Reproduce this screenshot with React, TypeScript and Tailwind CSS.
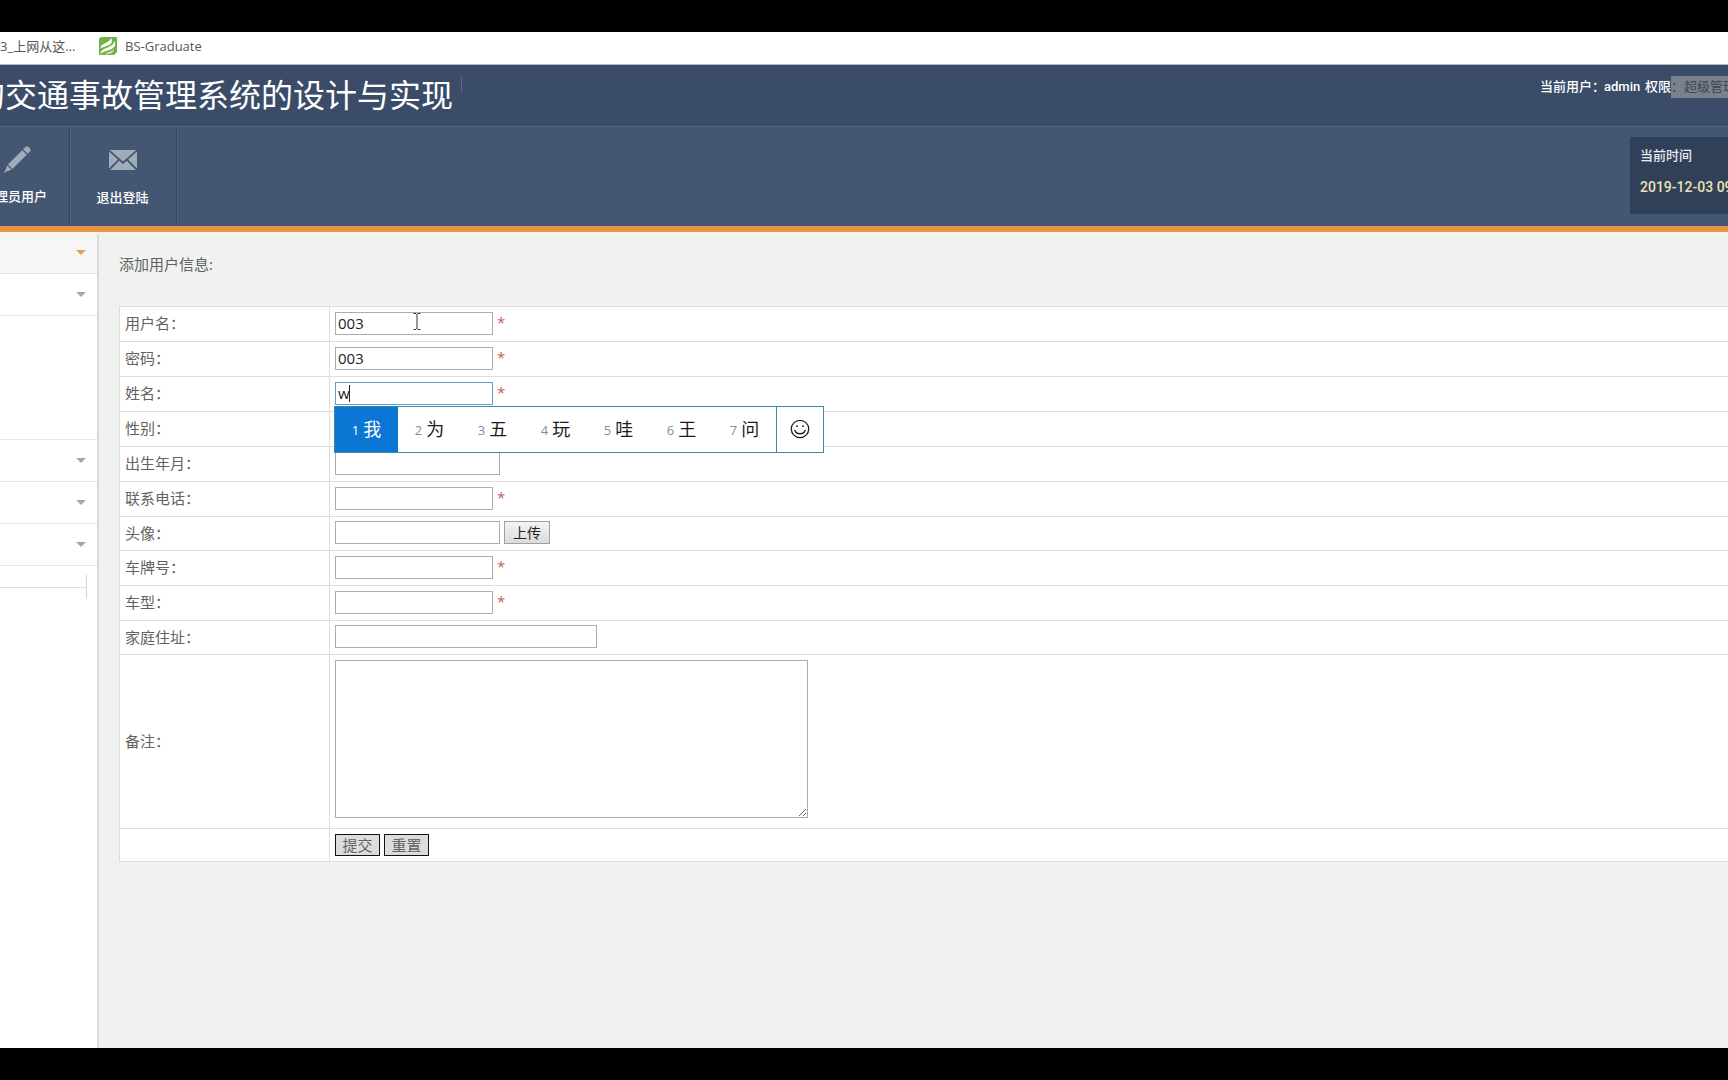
import React, { useState } from 'react';
import clsx from 'clsx';

type Field = {
  id: string;
  label: string;
  row: string;
  width?: string;
  required?: boolean;
  upload?: boolean;
};

const fields: Field[] = [
  { id: 'username', label: '用户名：', row: 'h-[35px]', width: 'w-[158px]', required: true },
  { id: 'password', label: '密码：', row: 'h-[35px]', width: 'w-[158px]', required: true },
  { id: 'realname', label: '姓名：', row: 'h-[35px]', width: 'w-[158px]', required: true },
  { id: 'sex', label: '性别：', row: 'h-[35px]' },
  { id: 'birthday', label: '出生年月：', row: 'h-[35px]', width: 'w-[165px]' },
  { id: 'phone', label: '联系电话：', row: 'h-[35px]', width: 'w-[158px]', required: true },
  { id: 'avatar', label: '头像：', row: 'h-[34px]', width: 'w-[165px]', upload: true },
  { id: 'plate', label: '车牌号：', row: 'h-[35px]', width: 'w-[158px]', required: true },
  { id: 'model', label: '车型：', row: 'h-[35px]', width: 'w-[158px]', required: true },
  { id: 'address', label: '家庭住址：', row: 'h-[34px]', width: 'w-[262px]' },
];

const candidates = ['我', '为', '五', '玩', '哇', '王', '问'];

const menuRows = [
  { height: 'h-[42px]', open: true, arrow: true },
  { height: 'h-[42px]', arrow: true },
  { height: 'h-[124px]' },
  { height: 'h-[42px]', arrow: true },
  { height: 'h-[42px]', arrow: true },
  { height: 'h-[42px]', arrow: true },
];

const PencilIcon = () => (
  <svg width="28" height="28" viewBox="0 0 28 28" fill="#a1acbb">
    <path d="M20.2 3.200l2-2a2.600 2.600 0 0 1 3.600 0l.9.9a2.600 2.600 0 0 1 0 3.600l-2 2z" />
    <path d="M19.300 4.200l4.500 4.500L9.400 23.100l-4.500-4.500z" />
    <path d="M4.200 19.500l4.300 4.300-4 1.300L1 27l1.700-3.700z" />
  </svg>
);

const MailIcon = () => (
  <svg width="30" height="22" viewBox="0 0 30 22" fill="#a1acbb">
    <path d="M1.800 1h26.400L15 12.600z" />
    <path d="M1 2.400l8.900 8.100L1 19.400z" />
    <path d="M29 2.400l-8.900 8.100 8.900 8.900z" />
    <path d="M11.200 11.700L15 15l3.800-3.300 9 9.300H2.200z" />
  </svg>
);

const LeafLogo = () => (
  <svg width="18" height="18" viewBox="0 0 18 18">
    <path d="M2 0h15a1 1 0 0 1 1 1v14l-3 3H1a1 1 0 0 1-1-1V2z" fill="#70b344" />
    <path d="M1.500 11.500C1.800 7.500 5 6.800 7.500 5.500 10 4.200 11.500 3 12 1c2.200 3.500.5 5.800-2.500 7.200C6.500 9.600 4 9.500 1.500 11.500z" fill="#fff" />
    <path d="M1.500 17c.2-4 3.500-5 6.500-6.300C11.500 9.200 14.500 8 15.500 4c2 4.500-.5 7-4 8.500C8 14 4.500 14 1.500 17z" fill="#fff" />
    <path d="M6 17.500c2-2.500 6-2 9-5.500 0 3.500-3.500 5-9 5.500z" fill="#d3ebc2" />
  </svg>
);

const SmileIcon = () => (
  <svg width="20" height="20" viewBox="0 0 20 20" fill="none" stroke="#222" strokeWidth="1.3" strokeLinecap="round">
    <circle cx="10" cy="10" r="8.700" />
    <path d="M4.800 11.300c1.500 4.600 8.900 4.600 10.400 0" />
    <circle cx="7" cy="7.200" r="0.900" fill="#222" stroke="none" />
    <circle cx="13" cy="7.200" r="0.900" fill="#222" stroke="none" />
  </svg>
);

const Arrow = ({ active }: { active?: boolean }) => (
  <svg width="10" height="5" viewBox="0 0 10 5" className={active ? 'fill-[#e2a04c]' : 'fill-[#a6a6a6]'}>
    <path d="M0 0h10L5 5z" />
  </svg>
);

const CandidateBar = () => (
  <div className="absolute -left-px top-[24px] z-10 flex h-[47px] border border-[#3f8799] bg-white">
    {candidates.map((word, i) => (
      <button
        key={word}
        type="button"
        className={clsx(
          'flex w-[63px] items-center justify-center gap-1 text-[18px]',
          i === 0 ? 'bg-[#0b76d4] text-white' : 'text-[#1c1c1c]'
        )}
      >
        <span className={clsx('pt-1 text-[13px]', i === 0 ? 'text-white' : 'text-[#8c8c8c]')}>{i + 1}</span>
        {word}
      </button>
    ))}
    <button type="button" aria-label="表情" className="flex w-[47px] items-center justify-center border-l border-[#3f8799]">
      <SmileIcon />
    </button>
  </div>
);

const App: React.FC = () => {
  const [values, setValues] = useState<Record<string, string>>({ username: '003', password: '003', realname: 'w' });

  const update = (id: string, value: string) => setValues((prev) => ({ ...prev, [id]: value }));

  return (
    <div className="flex h-screen flex-col overflow-hidden bg-black py-8 font-['Open_Sans','Noto_Sans_CJK_SC',sans-serif] text-[15px] text-[#626262]">
      {/* Bookmarks */}
      <div className="flex h-[33px] shrink-0 items-center border-b border-[#b9bec6] bg-white pb-1 text-[13px] leading-5 text-[#555]">
        <a href="#" className="w-[99px] whitespace-nowrap">3_上网从这...</a>
        <a href="#" className="flex items-center gap-2">
          <LeafLogo />
          BS-Graduate
        </a>
      </div>

      {/* Header */}
      <header className="flex h-[61px] shrink-0 items-start justify-between bg-[#3a4c68] text-white">
        <div className="flex items-start">
          <h1 className="flex h-[60px] w-[453px] items-center justify-end overflow-hidden whitespace-nowrap text-[32px]">
            的交通事故管理系统的设计与实现
          </h1>
          <div className="ml-2 mt-3 h-4 w-px bg-[#5c6b83]" />
        </div>
        <div className="flex h-[43px] w-[188px] shrink-0 items-center overflow-hidden whitespace-nowrap font-['Roboto','Noto_Sans_CJK_SC',sans-serif] text-[13px] font-medium">
          <span className="w-[64px] shrink-0">当前用户：</span>
          <span className="w-[41px] shrink-0">admin</span>
          <span>权限</span>
          <span className="bg-[#7a818d] font-normal leading-[22px] text-[#40454d]">：超级管理员</span>
        </div>
      </header>

      {/* Toolbar */}
      <nav className="flex h-[100px] shrink-0 justify-between border-t border-[#53647e] bg-[#445772] text-[13px] font-medium text-white">
        <div className="flex">
          <a href="#" className="flex w-[70px] flex-col items-start gap-3 overflow-hidden border-r border-[#34445c] pt-[19px]">
            <span className="pl-[3px]"><PencilIcon /></span>
            <span className="flex w-[47px] justify-end whitespace-nowrap leading-5">管理员用户</span>
          </a>
          <a href="#" className="flex w-[107px] flex-col items-center gap-4 border-x border-l-[#53647e] border-r-[#34445c] pr-[2px] pt-[22px]">
            <MailIcon />
            <span className="leading-5">退出登陆</span>
          </a>
          <div className="w-px bg-[#53647e]" />
        </div>
        <div className="mt-[10px] h-[77px] w-[98px] overflow-hidden whitespace-nowrap bg-[#304058] pl-[10px] pt-[8px]">
          <div className="leading-5 text-[#e8ebef]">当前时间</div>
          <div className="mt-3 font-['Roboto',sans-serif] text-[14px] leading-5 text-[#e9e3b4]">2019-12-03 09:21</div>
        </div>
      </nav>
      <div className="h-[6px] shrink-0 bg-[#e9934b]" />

      <div className="relative flex min-h-0 flex-1">
        {/* Side menu */}
        <aside className="w-[99px] shrink-0 border-r-2 border-[#d9dbd9] bg-white">
          {menuRows.map((item, i) => (
            <div
              key={i}
              className={clsx('flex items-center justify-end border-b border-[#e6e6e6] pr-[11px]', item.height, item.open && 'bg-[#f6f6f6]')}
            >
              {item.arrow && <Arrow active={item.open} />}
            </div>
          ))}
          <div className="mt-[9px] flex h-[24px] w-[87px] items-center border-r border-[#d4d4d4]">
            <div className="h-px w-full bg-[#e0e0e0]" />
          </div>
        </aside>

        <main className="min-w-0 flex-1 overflow-hidden bg-[#f0f2ef] pl-5 pt-5">
          <h2 className="leading-6">添加用户信息:</h2>
          <form onSubmit={(e) => e.preventDefault()} className="mt-[30px]">
            <table className="w-full border-collapse bg-white">
              <tbody>
                {fields.map((f) => (
                  <tr key={f.id} className={f.row}>
                    <th className="w-[210px] border border-[#dcdedc] p-0 pb-[2px] pl-[5px] text-left font-normal">
                      <label htmlFor={f.width ? f.id : undefined} className="block leading-6">{f.label}</label>
                    </th>
                    <td className="border-y border-[#dcdedc] p-0 pb-[2px] pl-[5px]">
                      {f.width && (
                        <div className="relative flex h-[23px] items-start">
                          <input
                            id={f.id}
                            type="text"
                            value={values[f.id] ?? ''}
                            onChange={(e) => update(f.id, e.target.value)}
                            className={clsx(
                              'h-[23px] border bg-white px-[2px] text-[15px] text-[#222] outline-none',
                              f.width,
                              f.id === 'realname' ? 'border-[#5f9fd0]' : 'border-[#acacac]'
                            )}
                          />
                          {f.required && <span className="ml-1 text-[15px] leading-5 text-[#cf5b58]">*</span>}
                          {f.upload && (
                            <button
                              type="button"
                              className="ml-1 h-[23px] w-[46px] border border-[#a0a0a0] bg-gradient-to-b from-[#f4f4f4] to-[#dcdcdc] text-[14px] leading-5 text-[#222]"
                            >
                              上传
                            </button>
                          )}
                          {f.id === 'username' && (
                            <svg className="absolute left-[78px] top-px" width="8" height="17" viewBox="0 0 8 17" fill="none" stroke="#333">
                              <path d="M.5.5h2.500L4 1.500 5 .5h2.500M4 1.500v14M.5 16.500h2.500l1-1 1 1h2.500" />
                            </svg>
                          )}
                          {f.id === 'realname' && (
                            <>
                              <span className="absolute left-[14px] top-[3px] h-[17px] w-px bg-[#222]" />
                              <CandidateBar />
                            </>
                          )}
                        </div>
                      )}
                    </td>
                  </tr>
                ))}
                <tr className="h-[174px]">
                  <th className="border border-[#dcdedc] p-0 pl-[5px] text-left font-normal">
                    <label htmlFor="remark">备注：</label>
                  </th>
                  <td className="border-y border-[#dcdedc] p-0 pl-[5px] pt-[5px] align-top">
                    <textarea
                      id="remark"
                      value={values.remark ?? ''}
                      onChange={(e) => update('remark', e.target.value)}
                      className="block h-[158px] w-[473px] border border-[#acacac] bg-white p-[2px] outline-none"
                    />
                  </td>
                </tr>
                <tr className="h-[33px]">
                  <th className="border border-[#dcdedc] p-0" />
                  <td className="border-y border-[#dcdedc] p-0 pl-[5px]">
                    <div className="flex gap-1">
                      <button type="submit" className="h-[22px] w-[45px] border border-[#111] bg-[#dcdcdc] leading-5">提交</button>
                      <button type="reset" onClick={() => setValues({})} className="h-[22px] w-[45px] border border-[#111] bg-[#dcdcdc] leading-5">重置</button>
                    </div>
                  </td>
                </tr>
              </tbody>
            </table>
          </form>
        </main>
        <div className="absolute inset-x-0 top-0 h-[2px] bg-[#fdf3e4]" />
      </div>
    </div>
  );
};

export default App;
